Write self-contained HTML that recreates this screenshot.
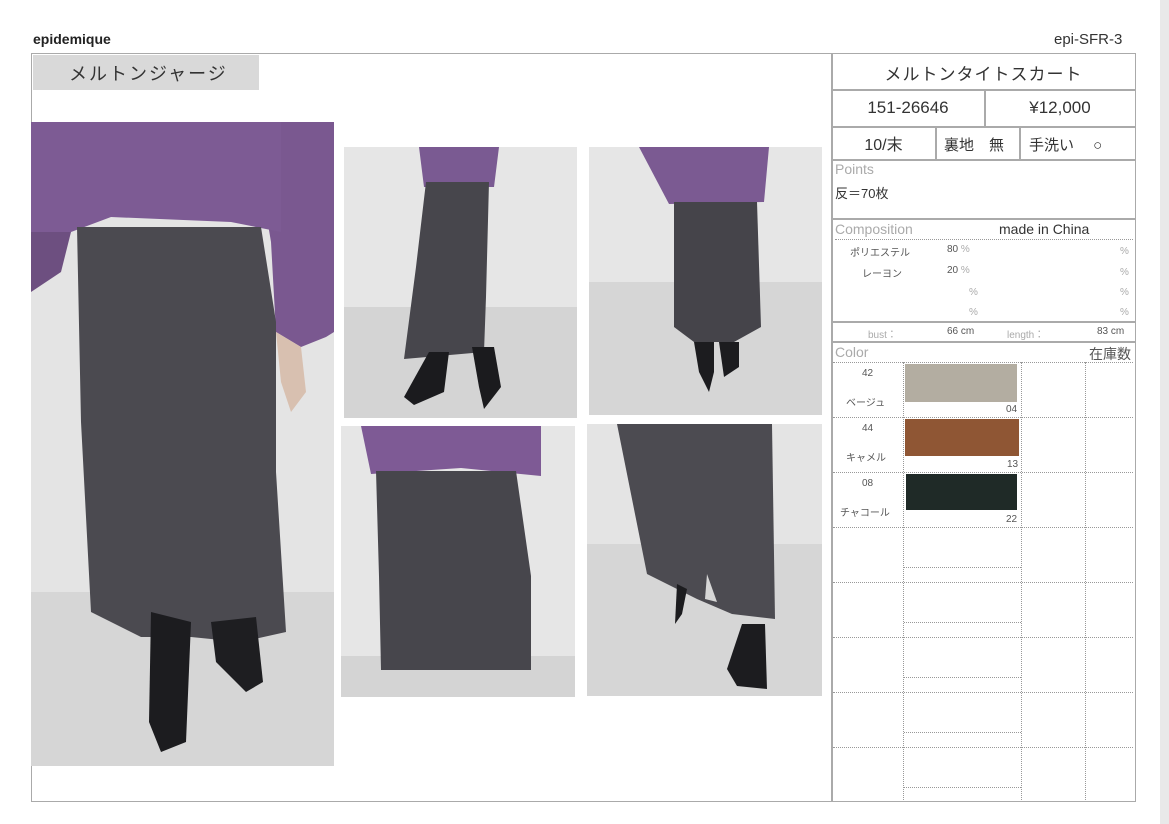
<!DOCTYPE html>
<html><head><meta charset="utf-8"><style>
body{margin:0;width:1169px;height:824px;background:#fff;position:relative;overflow:hidden;font-family:"Liberation Sans","Noto Sans CJK JP",sans-serif;color:#333}
.a{position:absolute}
.b{border:1.5px solid #aaa;box-sizing:border-box}
.c{position:absolute;display:flex;align-items:center;justify-content:center;box-sizing:border-box;font-size:17px;color:#333}
.dh{border-top:1px dotted #999;position:absolute}
.dv{border-left:1px dotted #999;position:absolute}
.s{font-size:10px;color:#555;position:absolute}
.g{color:#aaa}
</style></head><body>
<div class="a" style="left:1160px;top:0;width:9px;height:824px;background:#e9e9e9"></div>
<div class="a" style="left:33px;top:31px;font-size:14px;font-weight:bold;color:#222">epidemique</div>
<div class="a" style="left:1054px;top:31px;font-size:15px;color:#333">epi-SFR-3</div>
<div class="a b" style="left:31px;top:53px;width:1105px;height:749px"></div>
<div class="a" style="left:33px;top:55px;width:226px;height:35px;background:#d9d9d9"></div>
<div class="a" style="left:69px;top:60px;font-size:18px;color:#333;letter-spacing:2px">メルトンジャージ</div>

<!-- photos -->
<svg class="a" style="left:31px;top:122px" width="303" height="644" viewBox="0 0 303 644">
<rect width="303" height="644" fill="#e4e4e4"/><rect y="470" width="303" height="174" fill="#d6d6d6"/>
<path d="M0 0H303V210L295 215 270 225 245 210 240 120 220 0Z" fill="#7a5890"/>
<path d="M0 0H250V110L200 100 80 95 40 110 0 140Z" fill="#7d5b94"/>
<path d="M0 110 40 110 30 150 0 170Z" fill="#6d4f80"/>
<path d="M46 105 230 105 245 200 245 350 255 510 210 520 160 515 110 515 60 490 50 300Z" fill="#4b4a50"/>
<path d="M120 490 160 500 155 620 130 630 118 600Z" fill="#1c1c1f"/>
<path d="M180 500 225 495 232 560 215 570 185 540Z" fill="#1e1e21"/>
<path d="M245 210 270 225 275 270 260 290 250 260Z" fill="#d8c0b0"/>
</svg>
<svg class="a" style="left:344px;top:147px" width="233" height="271" viewBox="0 0 233 271">
<rect width="233" height="271" fill="#e6e6e6"/><rect y="160" width="233" height="111" fill="#d4d4d4"/>
<path d="M75 0 155 0 150 40 80 40Z" fill="#7a5a92"/>
<path d="M82 35 145 35 142 150 140 205 60 212 72 120Z" fill="#47464c"/>
<path d="M85 205 105 205 100 245 70 258 60 250Z" fill="#1b1b1e"/>
<path d="M128 200 150 200 157 240 140 262 135 240Z" fill="#1b1b1e"/>
</svg>
<svg class="a" style="left:589px;top:147px" width="233" height="268" viewBox="0 0 233 268">
<rect width="233" height="268" fill="#e6e6e6"/><rect y="135" width="233" height="133" fill="#d6d6d6"/>
<path d="M50 0 180 0 175 55 80 57Z" fill="#7b5a92"/>
<path d="M85 55 168 55 172 180 145 195 105 195 85 180Z" fill="#45444a"/>
<path d="M105 195 125 195 125 225 120 245 110 225Z" fill="#1c1c1f"/>
<path d="M130 195 150 195 150 220 135 230Z" fill="#1c1c1f"/>
</svg>
<svg class="a" style="left:341px;top:426px" width="234" height="271" viewBox="0 0 234 271">
<rect width="234" height="271" fill="#e6e6e6"/><rect y="230" width="234" height="41" fill="#d4d4d4"/>
<path d="M20 0 200 0 200 50 120 42 30 48Z" fill="#7e5a95"/>
<path d="M35 45 175 45 190 150 190 244 40 244 38 150Z" fill="#47464c"/>
</svg>
<svg class="a" style="left:587px;top:424px" width="235" height="272" viewBox="0 0 235 272">
<rect width="235" height="272" fill="#e4e4e4"/><rect y="120" width="235" height="152" fill="#d6d6d6"/>
<path d="M30 0 185 0 188 195 145 190 110 175 60 150Z" fill="#4c4b51"/>
<path d="M120 150 130 178 118 175Z" fill="#d6d6d6"/>
<path d="M90 160 100 165 95 190 88 200Z" fill="#1c1c1f"/>
<path d="M155 200 178 200 180 265 150 262 140 245Z" fill="#1c1c1f"/>
</svg>

<!-- right panel -->
<div class="a" style="left:831px;top:53px;width:1.5px;height:749px;background:#aaa"></div>
<div class="c" style="left:832px;top:54px;width:303px;height:36px;letter-spacing:1px">メルトンタイトスカート</div>
<div class="a" style="left:832px;top:89px;width:303px;height:1.5px;background:#aaa"></div>
<div class="c" style="left:832px;top:90px;width:152px;height:36px">151-26646</div>
<div class="c" style="left:985px;top:90px;width:150px;height:36px">¥12,000</div>
<div class="a" style="left:984px;top:90px;width:1.5px;height:36px;background:#aaa"></div>
<div class="a" style="left:832px;top:126px;width:303px;height:1.5px;background:#aaa"></div>
<div class="c" style="left:832px;top:127px;width:103px;height:32px;font-size:16px">10/末</div>
<div class="a" style="left:935px;top:127px;width:1.5px;height:32px;background:#aaa"></div>
<div class="a" style="left:944px;top:134px;font-size:15px">裏地　無</div>
<div class="a" style="left:1019px;top:127px;width:1.5px;height:32px;background:#aaa"></div>
<div class="a" style="left:1029px;top:134px;font-size:15px">手洗い　 ○</div>
<div class="a" style="left:832px;top:159px;width:303px;height:1.5px;background:#aaa"></div>
<div class="a g" style="left:835px;top:161px;font-size:14px">Points</div>
<div class="a" style="left:835px;top:183px;font-size:13px">反＝70枚</div>
<div class="a" style="left:832px;top:218px;width:303px;height:1.5px;background:#aaa"></div>
<div class="a g" style="left:835px;top:221px;font-size:14px">Composition</div>
<div class="a" style="left:999px;top:221px;font-size:14px">made in China</div>
<div class="dh" style="left:835px;top:239px;width:298px"></div>
<div class="s" style="left:850px;top:244px">ポリエステル</div><div class="s" style="left:947px;top:244px">80 <span class="g">%</span></div><div class="s g" style="left:1120px;top:246px">%</div>
<div class="s" style="left:862px;top:265px">レーヨン</div><div class="s" style="left:947px;top:265px">20 <span class="g">%</span></div><div class="s g" style="left:1120px;top:267px">%</div>
<div class="s g" style="left:969px;top:287px">%</div><div class="s g" style="left:1120px;top:287px">%</div>
<div class="s g" style="left:969px;top:307px">%</div><div class="s g" style="left:1120px;top:307px">%</div>
<div class="a" style="left:832px;top:321px;width:303px;height:1.5px;background:#aaa"></div>
<div class="s g" style="left:868px;top:326px">bust：</div><div class="s" style="left:947px;top:326px">66 cm</div>
<div class="s g" style="left:1007px;top:326px">length：</div><div class="s" style="left:1097px;top:326px">83 cm</div>
<div class="a" style="left:832px;top:341px;width:303px;height:1.5px;background:#aaa"></div>
<div class="a g" style="left:835px;top:344px;font-size:14px">Color</div>
<div class="a" style="left:1089px;top:344px;font-size:14px;color:#555">在庫数</div>

<div class="dh" style="left:833px;top:362px;width:300px"></div>
<div class="dh" style="left:833px;top:417px;width:300px"></div>
<div class="dh" style="left:833px;top:472px;width:300px"></div>
<div class="dh" style="left:833px;top:527px;width:300px"></div>
<div class="dh" style="left:833px;top:582px;width:300px"></div>
<div class="dh" style="left:833px;top:637px;width:300px"></div>
<div class="dh" style="left:833px;top:692px;width:300px"></div>
<div class="dh" style="left:833px;top:747px;width:300px"></div>
<div class="dh" style="left:904px;top:567px;width:117px"></div>
<div class="dh" style="left:904px;top:622px;width:117px"></div>
<div class="dh" style="left:904px;top:677px;width:117px"></div>
<div class="dh" style="left:904px;top:732px;width:117px"></div>
<div class="dh" style="left:904px;top:787px;width:117px"></div>
<div class="dv" style="left:903px;top:362px;height:438px"></div>
<div class="dv" style="left:1021px;top:362px;height:438px"></div>
<div class="dv" style="left:1085px;top:362px;height:438px"></div>

<div class="a" style="left:905px;top:364px;width:112px;height:38px;background:#b3ada1"></div>
<div class="a" style="left:905px;top:419px;width:114px;height:37px;background:#8f5634"></div>
<div class="a" style="left:906px;top:474px;width:111px;height:36px;background:#1f2a27"></div>
<div class="s" style="left:862px;top:368px">42</div><div class="s" style="left:846px;top:394px">ベージュ</div><div class="s" style="left:1006px;top:404px">04</div>
<div class="s" style="left:862px;top:423px">44</div><div class="s" style="left:846px;top:449px">キャメル</div><div class="s" style="left:1007px;top:459px">13</div>
<div class="s" style="left:862px;top:478px">08</div><div class="s" style="left:840px;top:504px">チャコール</div><div class="s" style="left:1006px;top:514px">22</div>
</body></html>
